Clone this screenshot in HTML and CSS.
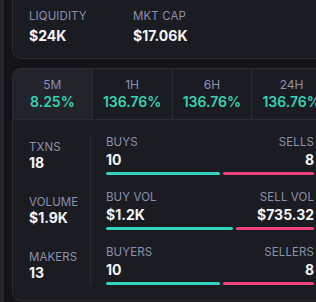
FILE: index.html
```html
<!DOCTYPE html>
<html lang="en">
<head>
    <meta charset="UTF-8">
    <meta name="viewport" content="width=device-width, initial-scale=1.0">
    <title>Pair stats</title>
    <link rel="stylesheet" href="styles.css">
</head>
<body>

    <div class="page">
        <!-- left edge strip -->
        <div class="edge"></div>

        <div class="panel">
            <!-- liquidity / market cap -->
            <div class="card summary">
                <div class="summary-item">
                    <div class="label">LIQUIDITY</div>
                    <div class="value">$24K</div>
                </div>
                <div class="summary-item">
                    <div class="label">MKT CAP</div>
                    <div class="value">$17.06K</div>
                </div>
            </div>

            <!-- timeframe tabs + txn stats -->
            <div class="card stats">
                <div class="tabs">
                    <div class="tab active">
                        <div class="tab-label">5M</div>
                        <div class="tab-value">8.25%</div>
                    </div>
                    <div class="tab">
                        <div class="tab-label">1H</div>
                        <div class="tab-value">136.76%</div>
                    </div>
                    <div class="tab">
                        <div class="tab-label">6H</div>
                        <div class="tab-value">136.76%</div>
                    </div>
                    <div class="tab">
                        <div class="tab-label">24H</div>
                        <div class="tab-value">136.76%</div>
                    </div>
                </div>

                <div class="stats-body">
                    <div class="totals">
                        <div class="total">
                            <div class="label">TXNS</div>
                            <div class="value">18</div>
                        </div>
                        <div class="total">
                            <div class="label">VOLUME</div>
                            <div class="value">$1.9K</div>
                        </div>
                        <div class="total">
                            <div class="label">MAKERS</div>
                            <div class="value">13</div>
                        </div>
                    </div>

                    <div class="splits">
                        <div class="split">
                            <div class="split-head">
                                <div>
                                    <div class="label">BUYS</div>
                                    <div class="value">10</div>
                                </div>
                                <div class="right">
                                    <div class="label">SELLS</div>
                                    <div class="value">8</div>
                                </div>
                            </div>
                            <div class="bars">
                                <div class="bar buy" style="flex: 10"></div>
                                <div class="bar sell" style="flex: 8"></div>
                            </div>
                        </div>
                        <div class="split">
                            <div class="split-head">
                                <div>
                                    <div class="label">BUY VOL</div>
                                    <div class="value">$1.2K</div>
                                </div>
                                <div class="right">
                                    <div class="label">SELL VOL</div>
                                    <div class="value">$735.32</div>
                                </div>
                            </div>
                            <div class="bars">
                                <div class="bar buy" style="flex: 1200"></div>
                                <div class="bar sell" style="flex: 735"></div>
                            </div>
                        </div>
                        <div class="split">
                            <div class="split-head">
                                <div>
                                    <div class="label">BUYERS</div>
                                    <div class="value">10</div>
                                </div>
                                <div class="right">
                                    <div class="label">SELLERS</div>
                                    <div class="value">8</div>
                                </div>
                            </div>
                            <div class="bars">
                                <div class="bar buy" style="flex: 10"></div>
                                <div class="bar sell" style="flex: 8"></div>
                            </div>
                        </div>
                    </div>
                </div>
            </div>
        </div>
    </div>

</body>
</html>
```

FILE: styles.css
```css
/* base */
body {
    margin: 0;
    padding: 0;
    font-family: Inter, "Noto Sans", sans-serif;
    color: #f2f3f5;
    background-color: #131318;
    overflow: hidden;
}

.page {
    display: flex;
    height: 302px;
}

/* strip on the left edge */
.edge {
    width: 4px;
    flex-shrink: 0;
    background-color: #24262d;
}

.panel {
    margin-left: 8px;
    width: 320px;
    flex-shrink: 0;
    display: flex;
    flex-direction: column;
    gap: 9px;
}

/* cards */
.card {
    background-color: #1b1c22;
    border: 1px solid #2a2b32;
    border-radius: 8px;
}

.label {
    font-size: 11.5px;
    line-height: 14px;
    color: #8a91ad;
    letter-spacing: 0.1px;
}

.value {
    font-size: 14px;
    line-height: 18px;
    font-weight: 700;
    color: #f4f5f7;
}

/* liquidity / mkt cap */
.summary {
    margin-top: -10px;
    padding: 17px 16px 13px;
    display: flex;
    border-top-left-radius: 0;
    border-top-right-radius: 0;
}

.summary-item {
    width: 104px;
}

.summary .label {
    line-height: 16px;
}

.summary .value {
    margin-top: 3px;
}

/* tabs */
.tabs {
    display: flex;
    border-bottom: 1px solid #2a2b32;
}

.tab {
    width: 79px;
    padding: 8px 0 9px;
    text-align: center;
    border-right: 1px solid #2a2b32;
}

.tab:last-child {
    border-right: none;
}

.tab.active {
    background-color: #23242b;
    border-top-left-radius: 7px;
}

.tab-label {
    font-size: 12px;
    line-height: 16px;
    color: #8a91ad;
}

.tab-value {
    font-size: 14px;
    line-height: 16px;
    font-weight: 600;
    color: #35d3b4;
    margin-top: 1px;
}

/* stats */
.stats {
    flex: 1;
    margin-bottom: 2px;
}

.stats-body {
    display: flex;
    padding: 15px 17px 15px 16px;
}

.totals {
    width: 61px;
    display: grid;
    grid-template-rows: repeat(3, 40px);
    row-gap: 15px;
    border-right: 1px solid #2a2b32;
}

.total {
    align-self: center;
    padding-top: 2px;
}

.splits {
    flex: 1;
    padding-left: 15px;
    display: flex;
    flex-direction: column;
    gap: 15px;
}

.split {
    height: 40px;
}

.split-head {
    display: flex;
    justify-content: space-between;
}

.split-head .value {
    margin-top: 2px;
}

.right {
    text-align: right;
}

.bars {
    display: flex;
    gap: 3px;
    margin-top: 3px;
}

.bar {
    height: 3px;
    border-radius: 2px;
}

.bar.buy {
    background-color: #34d4c3;
}

.bar.sell {
    background-color: #f4427d;
}
```
